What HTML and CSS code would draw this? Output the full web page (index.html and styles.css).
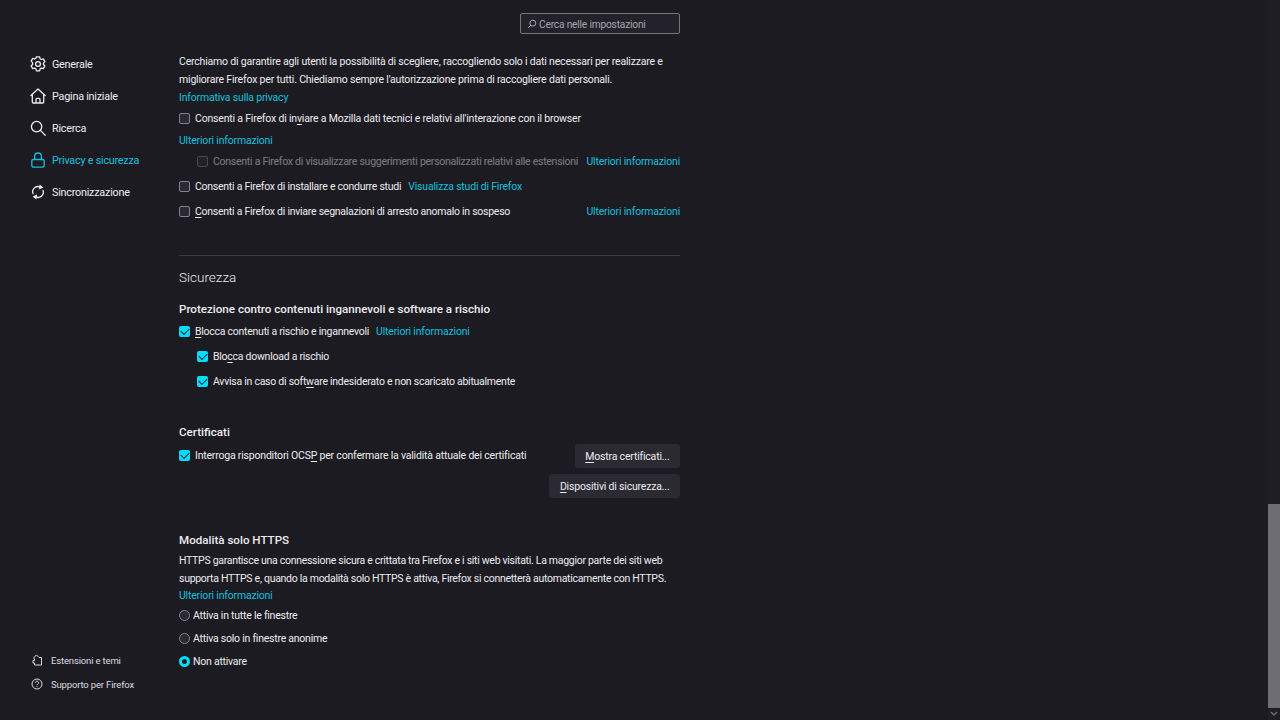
FILE: index.html
```html
<!DOCTYPE html>
<html lang="it">
<head>
    <meta charset="UTF-8">
    <title>Impostazioni</title>
    <link rel="stylesheet" href="styles.css">
</head>
<body>
    <div class="app">
        <nav class="sidebar">
            <div class="nav-main">
                <a class="nav-item">
                    <svg class="nav-icon" viewBox="0 0 16 16"><path d="M6.4.8h3.2l.5 2 1.2.7 2-.6 1.6 2.7-1.5 1.5v1.4l1.5 1.5-1.6 2.7-2-.6-1.2.7-.5 2H6.4l-.5-2-1.2-.7-2 .6-1.6-2.7 1.5-1.5V6.6L1.1 5.1l1.6-2.7 2 .6 1.2-.7z"/><circle cx="8" cy="8" r="2.4"/></svg>
                    Generale
                </a>
                <a class="nav-item">
                    <svg class="nav-icon" viewBox="0 0 16 16"><path d="M.9 7.6 8 1l7.1 6.6M2.3 6.4V14a1 1 0 0 0 1 1h9.4a1 1 0 0 0 1-1V6.4M6 15v-3.6a1 1 0 0 1 1-1h2a1 1 0 0 1 1 1V15"/></svg>
                    Pagina iniziale
                </a>
                <a class="nav-item">
                    <svg class="nav-icon" viewBox="0 0 16 16"><circle cx="6.6" cy="6.6" r="5.2"/><path d="m10.4 10.4 4.8 4.8"/></svg>
                    Ricerca
                </a>
                <a class="nav-item active">
                    <svg class="nav-icon" viewBox="0 0 16 16"><path d="M4.6 7.5V4.4a3.4 3.4 0 0 1 6.8 0v3.1"/><rect x="1.8" y="7.5" width="12.4" height="7.7" rx="1.6"/></svg>
                    Privacy e sicurezza
                </a>
                <a class="nav-item">
                    <svg class="nav-icon" viewBox="0 0 16 16"><path d="M3 9.6A5.2 5.2 0 0 1 10.6 3.4M13 6.4A5.2 5.2 0 0 1 5.4 12.6"/><path class="solid" d="M9.6.4 13.4 3.6 9 5.6zM6.4 15.6 2.6 12.4 7 10.4z"/></svg>
                    Sincronizzazione
                </a>
            </div>
            <div class="nav-foot">
                <a class="foot-item">
                    <svg class="foot-icon" viewBox="0 0 12 12"><path d="M2 6.500h1.500V5L2.600 4 5.400.9 8 3.500h2.500v7.500H3.500V9H2z"/></svg>
                    Estensioni e temi
                </a>
                <a class="foot-item">
                    <svg class="foot-icon" viewBox="0 0 12 12"><circle cx="6" cy="6" r="5"/><path d="M4.400 4.700a1.600 1.600 0 1 1 2.400 1.400c-.5.3-.8.6-.8 1.100M6 8.300v.9"/></svg>
                    Supporto per Firefox
                </a>
            </div>
        </nav>

        <main class="content">
            <div class="search-row">
                <div class="search-box">
                    <svg class="search-icon" viewBox="0 0 12 12"><circle cx="7" cy="5" r="3.600"/><path d="M4.400 7.600 1.200 10.800"/></svg>
                    Cerca nelle impostazioni
                </div>
            </div>

            <p class="para first">Cerchiamo di garantire agli utenti la possibilità di scegliere, raccogliendo solo i dati necessari per realizzare e migliorare Firefox per tutti. Chiediamo sempre l'autorizzazione prima di raccogliere dati personali.</p>
            <div class="line link-line"><a class="link">Informativa sulla privacy</a></div>

            <div class="check-row r-tech"><span class="box"></span><span>Consenti a Firefox di in<u>v</u>iare a Mozilla dati tecnici e relativi all'interazione con il browser</span></div>
            <div class="line link-more"><a class="link">Ulteriori informazioni</a></div>
            <div class="check-row sub disabled r-sugg"><span class="box"></span><span class="grow tight">Consenti a Firefox di visualizzare suggerimenti personalizzati relativi alle estensioni</span><a class="link">Ulteriori informazioni</a></div>
            <div class="check-row r-studi"><span class="box"></span><span class="tight">Consenti a Firefox di installare e condurre studi</span><a class="link gap">Visualizza studi di Firefox</a></div>
            <div class="check-row r-crash"><span class="box"></span><span class="grow tight"><u>C</u>onsenti a Firefox di inviare segnalazioni di arresto anomalo in sospeso</span><a class="link">Ulteriori informazioni</a></div>

            <hr class="rule">
            <h2 class="section-title">Sicurezza</h2>

            <h3 class="group-title g-prot">Protezione contro contenuti ingannevoli e software a rischio</h3>
            <div class="check-row r-blocca"><span class="box on"></span><span class="tight"><u>B</u>locca contenuti a rischio e ingannevoli</span><a class="link gap">Ulteriori informazioni</a></div>
            <div class="check-row sub r-next"><span class="box on"></span><span class="tight">Blo<u>c</u>ca download a rischio</span></div>
            <div class="check-row sub r-next"><span class="box on"></span><span class="tight">Avvisa in caso di soft<u>w</u>are indesiderato e non scaricato abitualmente</span></div>

            <h3 class="group-title g-cert">Certificati</h3>
            <div class="cert-row">
                <div class="check-row"><span class="box on"></span><span>Interroga risponditori OCS<u>P</u> per confermare la validità attuale dei certificati</span></div>
                <button class="btn"><u>M</u>ostra certificati...</button>
            </div>
            <div class="btn-row"><button class="btn"><u>D</u>ispositivi di sicurezza...</button></div>

            <h3 class="group-title g-https">Modalità solo HTTPS</h3>
            <p class="para https-text">HTTPS garantisce una connessione sicura e crittata tra Firefox e i siti web visitati. La maggior parte dei siti web supporta HTTPS e, quando la modalità solo HTTPS è attiva, Firefox si connetterà automaticamente con HTTPS.</p>
            <div class="line https-link"><a class="link">Ulteriori informazioni</a></div>
            <div class="radio-row r-first"><span class="radio"></span>Attiva in tutte le finestre</div>
            <div class="radio-row"><span class="radio"></span>Attiva solo in finestre anonime</div>
            <div class="radio-row"><span class="radio on"></span>Non attivare</div>
        </main>

        <div class="scrollbar">
            <div class="scroll-spacer"></div>
            <div class="scroll-thumb"></div>
            <svg class="scroll-arrow" viewBox="0 0 8 6"><path d="M1 1l3 3 3-3"/></svg>
        </div>
    </div>
</body>
</html>
```

FILE: styles.css
```css
* {
    box-sizing: border-box;
}

html, body {
    margin: 0;
    height: 720px;
    overflow: hidden;
}

body {
    background-color: #1c1b22;
    color: #ececef;
    font-family: 'Roboto', 'Liberation Sans', sans-serif;
    font-size: 10.5px;
    letter-spacing: -0.19px;
}

u {
    text-underline-offset: 2px;
}

.app {
    display: flex;
    height: 720px;
}

/* sidebar */
.sidebar {
    width: 179px;
    flex: none;
    display: flex;
    flex-direction: column;
    justify-content: space-between;
    padding: 48px 0 24px 30px;
}

.nav-item {
    display: flex;
    align-items: center;
    gap: 6px;
    height: 32px;
    font-size: 10.8px;
    letter-spacing: -0.23px;
}

.nav-item.active {
    color: #12c0de;
}

.nav-icon {
    width: 16px;
    height: 16px;
    fill: none;
    stroke: currentColor;
    stroke-width: 1.3;
    stroke-linejoin: round;
    stroke-linecap: round;
}

.nav-icon .solid {
    fill: currentColor;
    stroke: none;
}

.foot-item {
    display: flex;
    align-items: center;
    gap: 8px;
    height: 24px;
    padding-left: 1px;
    font-size: 9.5px;
    letter-spacing: -0.16px;
    color: #dcdce0;
}

.foot-icon {
    width: 12px;
    height: 12px;
    fill: none;
    stroke: currentColor;
    stroke-width: 1;
}

/* main column */
.content {
    width: 501px;
    flex: none;
}

.search-row {
    display: flex;
    justify-content: flex-end;
    padding-top: 13px;
}

.search-box {
    width: 160px;
    height: 21px;
    display: flex;
    align-items: center;
    gap: 2px;
    padding: 1px 0 0 6px;
    background-color: #23222b;
    border: 1px solid #75747c;
    border-radius: 2px;
    color: #a6a6ac;
    font-size: 10.2px;
}

.search-icon {
    width: 10px;
    height: 10px;
    fill: none;
    stroke: #c4c4c9;
    stroke-width: 1;
}

.para {
    margin: 0;
    line-height: 18px;
}

.para.first {
    margin-top: 19px;
}

.line {
    height: 18px;
    line-height: 18px;
}

.link {
    color: #12c0de;
    white-space: nowrap;
}

.link.gap {
    margin-left: 7px;
}

.check-row {
    display: flex;
    align-items: center;
    height: 18px;
    white-space: nowrap;
}

.check-row.sub {
    padding-left: 18px;
}

.check-row .grow {
    flex: 1;
}

.tight {
    letter-spacing: -0.26px;
}

.check-row.disabled > .box,
.check-row.disabled > .grow {
    opacity: 0.45;
}

.box {
    flex: none;
    width: 11px;
    height: 11px;
    margin-right: 5px;
    background-color: #2b2a33;
    border: 1px solid #82818c;
    border-radius: 2px;
}

.box.on {
    border: none;
    background-color: #00ddff;
    position: relative;
}

.box.on::after {
    content: "";
    position: absolute;
    left: 2px;
    top: 1px;
    width: 7px;
    height: 4px;
    border-left: 1.2px solid #1c1b22;
    border-bottom: 1.2px solid #1c1b22;
    transform: translateY(1px) rotate(-45deg);
}

.r-tech { margin-top: 2px; }
.link-more { margin-top: 5px; }
.r-sugg { margin-top: 2px; }
.r-studi { margin-top: 7px; }
.r-crash { margin-top: 7px; }

.rule {
    margin: 35px 0 0;
    border: none;
    border-top: 1px solid #3c3b43;
}

.section-title {
    margin: 11px 0 0;
    font-size: 13.5px;
    font-weight: 300;
    letter-spacing: 0;
    line-height: 20px;
    color: #e8e8ec;
}

.group-title {
    margin: 0;
    font-size: 11.6px;
    font-weight: 500;
    letter-spacing: 0;
    line-height: 18px;
}

.g-prot { margin-top: 13px; }
.r-blocca { margin-top: 4px; }
.r-next { margin-top: 7px; }
.g-cert { margin-top: 33px; }
.g-https { margin-top: 33px; }

.cert-row {
    display: flex;
    justify-content: space-between;
    margin-top: 3px;
}

.cert-row .check-row {
    margin-top: 2px;
    letter-spacing: -0.2px;
}

.btn-row {
    display: flex;
    justify-content: flex-end;
    margin-top: 6px;
}

.btn {
    height: 24px;
    padding: 0 10.5px;
    background-color: #2b2a33;
    border: none;
    border-radius: 3px;
    color: #ececef;
    font-family: inherit;
    font-size: 10.5px;
    letter-spacing: -0.19px;
}

.https-text {
    margin-top: 3px;
    letter-spacing: -0.29px;
}

.https-link {
    margin-top: -1px;
}

.radio-row {
    display: flex;
    align-items: center;
    height: 18px;
    margin-top: 5px;
    letter-spacing: -0.24px;
}

.radio-row.r-first {
    margin-top: 1px;
}

.radio {
    flex: none;
    width: 11px;
    height: 11px;
    margin-right: 3px;
    background-color: #2b2a33;
    border: 1px solid #82818c;
    border-radius: 50%;
}

.radio.on {
    background-color: #1c1b22;
    border: 3px solid #00ddff;
}

/* scrollbar */
.scrollbar {
    margin-left: auto;
    width: 12px;
    display: flex;
    flex-direction: column;
    background-color: #1f1e25;
}

.scroll-spacer {
    height: 504px;
}

.scroll-thumb {
    flex: 1;
    background-color: #6e6d73;
}

.scroll-arrow {
    width: 8px;
    height: 12px;
    margin: 0 auto;
    fill: none;
    stroke: #6e6d73;
    stroke-width: 1.4;
}
```
